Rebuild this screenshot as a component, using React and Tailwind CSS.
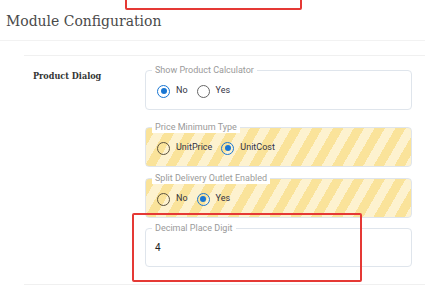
import React from "react";

const stripe =
  "bg-[repeating-linear-gradient(120deg,#fae39a_0px,#fae39a_9px,#fdf2cf_9px,#fdf2cf_18px)]";

function Radio({ checked, label, dark }) {
  return (
    <label className="flex items-center gap-[6px] mr-[9px]">
      <span
        className={
          "w-[13px] h-[13px] rounded-full border-[1.5px] flex items-center justify-center " +
          (checked ? "border-[#1976d2]" : dark ? "border-[#5b5240]" : "border-[#666666]")
        }
      >
        {checked && <span className="w-[6px] h-[6px] rounded-full bg-[#1976d2]" />}
      </span>
      <span className="text-[9px] text-[#333344]">{label}</span>
    </label>
  );
}

function Field({ legend, striped, className, children }) {
  return (
    <fieldset
      className={
        "border border-[#dfe5ec] rounded-[4px] pl-[11px] pr-[10px] pb-[11px] " +
        (striped ? stripe + " " : "bg-white ") +
        className
      }
    >
      <legend className="ml-[-5px] px-[3px] bg-white text-[9px] leading-[12px] text-[#9a9a9a]">
        {legend}
      </legend>
      {children}
    </fieldset>
  );
}

export default function App() {
  return (
    <div
      className="relative w-[425px] h-[289px] bg-white overflow-hidden"
      style={{ fontFamily: "Roboto, 'Liberation Sans', sans-serif" }}
    >
      <div className="h-[41px] border-b border-[#f2f2f2] pl-[6px] pt-[10px]">
        <h1
          className="text-[15.5px] leading-[22px] text-[#4a4a4a]"
          style={{ fontFamily: "'DejaVu Serif Condensed', 'Liberation Serif', serif" }}
        >
          Module Configuration
        </h1>
      </div>
      <div className="ml-[24px] mt-[14px] border-t border-b border-[#f0f0f0] pt-[8px] pb-[17px] flex">
        <div
          className="w-[121px] pl-[9px] pt-[6px] text-[9px] font-bold text-[#333333]"
          style={{ fontFamily: "'DejaVu Serif Condensed', 'Liberation Serif', serif" }}
        >
          Product Dialog
        </div>
        <div className="w-[267px] flex flex-col">
          <Field legend="Show Product Calculator" className="">
            <div className="flex items-center h-[14px] mt-[8px]">
              <Radio checked label="No" />
              <Radio label="Yes" />
            </div>
          </Field>
          <Field legend="Price Minimum Type" striped className="mt-[11px]">
            <div className="flex items-center h-[14px] mt-[8px]">
              <Radio dark label="UnitPrice" />
              <Radio checked label="UnitCost" />
            </div>
          </Field>
          <Field legend="Split Delivery Outlet Enabled" striped className="mt-[5px]">
            <div className="flex items-center h-[14px] mt-[8px]">
              <Radio dark label="No" />
              <Radio checked label="Yes" />
            </div>
          </Field>
          <Field legend="Decimal Place Digit" className="mt-[4px]">
            <div className="mt-[7px] ml-[-2px] h-[14px] text-[10px] leading-[14px] text-[#222222]">4</div>
          </Field>
        </div>
      </div>
      <div className="absolute left-[125px] top-[-20px] w-[177px] h-[30px] border-2 border-[#e53935] rounded-[2px]" />
      <div className="absolute left-[132px] top-[213px] w-[230px] h-[69px] border-2 border-[#e53935] rounded-[2px]" />
    </div>
  );
}
